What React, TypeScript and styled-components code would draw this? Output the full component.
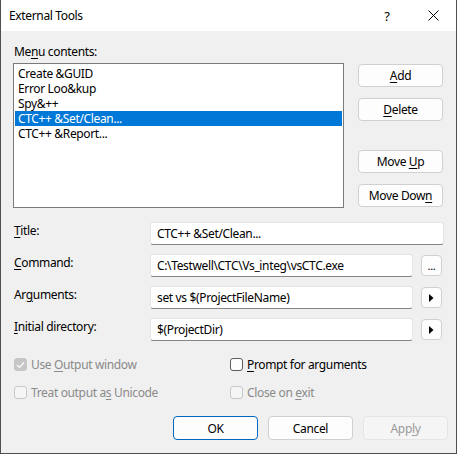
import React from 'react';
import styled, { createGlobalStyle } from 'styled-components';

const Global = createGlobalStyle`
    html, body {
        margin:0;
        padding:0;
        background:#fff;
    }
    body {
        font-family:"Noto Sans", "Liberation Sans", sans-serif;
        font-size:12px;
        letter-spacing:-0.35px;
        color:#000;
    }
`
const Window = styled.div`
    width:457px;
    height:454px;
    box-sizing:border-box;
    border:1px solid #4f4f4f;
    border-top:none;
    display:flex;
    flex-direction:column;
    background:#f0f0f0;
`
const TitleBar = styled.div`
    height:31px;
    background:#fff;
    display:flex;
    align-items:center;
    padding-left:8px;
    flex-shrink:0;
`
const TitleText = styled.div`
    flex:1;
    font-size:12px;
`
const CaptionButton = styled.div`
    width:46px;
    height:31px;
    display:flex;
    align-items:center;
    justify-content:center;
    font-size:13px;
`
const Body = styled.div`
    flex:1;
    padding:13px 12px 0 12px;
    display:flex;
    flex-direction:column;
`
const TopGrid = styled.div`
    display:grid;
    grid-template-columns:331px 85px;
    column-gap:14px;
`
const Label = styled.div<{ $disabled?: boolean }>`
    line-height:15px;
    color:${p => p.$disabled ? '#8a8a8a' : '#000'};
    white-space:nowrap;
`
const ListBox = styled.div`
    margin-top:4px;
    height:145px;
    box-sizing:border-box;
    border:1px solid #7a7a7a;
    background:#fff;
    padding:2px 1px;
`
const ListItem = styled.div<{ $selected?: boolean }>`
    height:15px;
    line-height:15px;
    padding-left:3px;
    overflow:hidden;
    background:${p => p.$selected ? '#0078d7' : 'transparent'};
    color:${p => p.$selected ? '#fff' : '#000'};
`
const SideButtons = styled.div`
    grid-row:2;
    grid-column:2;
    padding-top:5px;
    display:flex;
    flex-direction:column;
`
const Button = styled.div<{ $primary?: boolean; $disabled?: boolean; $gap?: number }>`
    height:23px;
    box-sizing:border-box;
    display:flex;
    align-items:center;
    justify-content:center;
    border-radius:4px;
    background:${p => p.$disabled ? '#f5f5f5' : '#fdfdfd'};
    border:1px solid ${p => p.$primary ? '#0067c0' : p.$disabled ? '#e5e5e5' : '#d0d0d0'};
    color:${p => p.$disabled ? '#9a9a9a' : '#000'};
    margin-top:${p => p.$gap ?? 0}px;
`
const Fields = styled.div`
    margin-top:14px;
    display:grid;
    grid-template-columns:137px 1fr;
    row-gap:9px;
    align-items:start;
`
const FieldLabel = styled(Label)`
    padding-top:1px;
    padding-left:1px;
`
const InputRow = styled.div`
    display:flex;
    gap:8px;
    align-items:center;
`
const Input = styled.div`
    flex:1;
    height:23px;
    box-sizing:border-box;
    background:#fff;
    border:1px solid #e5e5e5;
    border-bottom:1px solid #868686;
    border-radius:3px;
    padding-left:6px;
    display:flex;
    align-items:center;
`
const SmallButton = styled.div`
    width:21px;
    height:21px;
    box-sizing:border-box;
    border:1px solid #d0d0d0;
    border-radius:4px;
    background:#fdfdfd;
    display:flex;
    align-items:center;
    justify-content:center;
    margin-right:2px;
    font-size:11px;
    line-height:11px;
`
const Checks = styled.div`
    margin-top:16px;
    display:grid;
    grid-template-columns:216px 1fr;
    row-gap:13px;
    padding-left:1px;
`
const CheckRow = styled.div`
    display:flex;
    align-items:center;
    gap:4px;
    height:15px;
`
const Box = styled.div<{ $disabled?: boolean; $checked?: boolean }>`
    width:13px;
    height:13px;
    box-sizing:border-box;
    border-radius:3px;
    border:1px solid ${p => p.$checked ? '#c6c6c6' : p.$disabled ? '#c8c8c8' : '#5c5c5c'};
    background:${p => p.$checked ? '#c6c6c6' : p.$disabled ? '#f5f5f5' : '#fdfdfd'};
    display:flex;
    align-items:center;
    justify-content:center;
`
const Footer = styled.div`
    margin-top:16px;
    display:flex;
    justify-content:flex-end;
    gap:10px;
    margin-right:-4px;
`
const FooterButton = styled(Button)`
    width:85px;
    height:24px;
`
const U = styled.span`
    text-decoration:underline;
    text-underline-offset:2px;
`

const Arrow = () => (
    <svg width="5" height="8" viewBox="0 0 5 8">
        <path d="M0 0 L4.5 4 L0 8 Z" fill="#000" />
    </svg>
)

const App = () => {
    return (
        <>
            <Global />
            <Window>
                <TitleBar>
                    <TitleText>External Tools</TitleText>
                    <CaptionButton>?</CaptionButton>
                    <CaptionButton>
                        <svg width="11" height="11" viewBox="0 0 11 11">
                            <path d="M0.5 0.5 L10.5 10.5 M10.5 0.5 L0.5 10.5" stroke="#000" strokeWidth="1" />
                        </svg>
                    </CaptionButton>
                </TitleBar>
                <Body>
                    <TopGrid>
                        <Label style={{ paddingLeft: 1 }}>Me<U>n</U>u contents:</Label>
                        <div />
                        <ListBox>
                            <ListItem>Create &amp;GUID</ListItem>
                            <ListItem>Error Loo&amp;kup</ListItem>
                            <ListItem>Spy&amp;++</ListItem>
                            <ListItem $selected>CTC++ &amp;Set/Clean...</ListItem>
                            <ListItem>CTC++ &amp;Report...</ListItem>
                        </ListBox>
                        <SideButtons>
                            <Button><span><U>A</U>dd</span></Button>
                            <Button $gap={11}><span><U>D</U>elete</span></Button>
                            <Button $gap={29}><span>Move <U>U</U>p</span></Button>
                            <Button $gap={11}><span>Move Dow<U>n</U></span></Button>
                        </SideButtons>
                    </TopGrid>
                    <Fields>
                        <FieldLabel><U>T</U>itle:</FieldLabel>
                        <InputRow><Input>CTC++ &amp;Set/Clean...</Input></InputRow>
                        <FieldLabel><U>C</U>ommand:</FieldLabel>
                        <InputRow>
                            <Input>C:\Testwell\CTC\Vs_integ\vsCTC.exe</Input>
                            <SmallButton>...</SmallButton>
                        </InputRow>
                        <FieldLabel>Ar<U>g</U>uments:</FieldLabel>
                        <InputRow>
                            <Input>set vs $(ProjectFileName)</Input>
                            <SmallButton><Arrow /></SmallButton>
                        </InputRow>
                        <FieldLabel><U>I</U>nitial directory:</FieldLabel>
                        <InputRow>
                            <Input>$(ProjectDir)</Input>
                            <SmallButton><Arrow /></SmallButton>
                        </InputRow>
                    </Fields>
                    <Checks>
                        <CheckRow>
                            <Box $checked>
                                <svg width="9" height="8" viewBox="0 0 9 8">
                                    <path d="M1 4 L3.5 6.5 L8 1.5" stroke="#fff" strokeWidth="1.2" fill="none" />
                                </svg>
                            </Box>
                            <Label $disabled>Use <U>O</U>utput window</Label>
                        </CheckRow>
                        <CheckRow>
                            <Box />
                            <Label><U>P</U>rompt for arguments</Label>
                        </CheckRow>
                        <CheckRow>
                            <Box $disabled />
                            <Label $disabled>Treat output a<U>s</U> Unicode</Label>
                        </CheckRow>
                        <CheckRow>
                            <Box $disabled />
                            <Label $disabled>Close on <U>e</U>xit</Label>
                        </CheckRow>
                    </Checks>
                    <Footer>
                        <FooterButton $primary>OK</FooterButton>
                        <FooterButton>Cancel</FooterButton>
                        <FooterButton $disabled><span>App<U>l</U>y</span></FooterButton>
                    </Footer>
                </Body>
            </Window>
        </>
    )
}

export default App;
